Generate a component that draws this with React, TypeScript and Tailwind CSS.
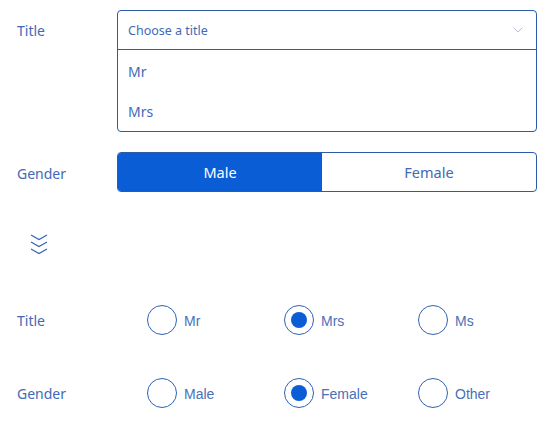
import { ChevronDown } from 'lucide-react';

const ui = "font-['Noto_Sans',sans-serif]";
const radioFont = "font-['Liberation_Sans',Arial,sans-serif]";

function Radio({ label, checked }: { label: string; checked?: boolean }) {
	return (
		<div className="flex items-center gap-[7px]">
			<span className="w-[30px] h-[30px] rounded-full border-[1.5px] border-[#2f62b4] flex items-center justify-center shrink-0">
				{checked && <span className="w-[16px] h-[16px] rounded-full bg-[#0b5dd6]" />}
			</span>
			<span className={`${radioFont} text-[14px] text-[#4a70b8] pt-[3px]`}>{label}</span>
		</div>
	);
}

function RadioRow({ label, options, selected }: { label: string; options: string[]; selected: string }) {
	return (
		<div className="flex items-center">
			<span className={`${ui} w-[100px] text-[14px] text-[#4169b6]`}>{label}</span>
			<div className="grid grid-cols-[137px_134px_auto] pl-[30px]">
				{options.map((o) => (
					<Radio key={o} label={o} checked={o === selected} />
				))}
			</div>
		</div>
	);
}

export default function App() {
	return (
		<div className={`${ui} bg-white w-[559px] h-[440px] pl-[17px] pt-[10px]`}>
			<div className="flex items-start">
				<span className="w-[100px] text-[14px] text-[#4169b6] pt-[10px]">Title</span>
				<div className="w-[420px] h-[122px] border border-[#2a5ca8] rounded-[4px] flex flex-col">
					<div className="h-[39px] flex items-center justify-between px-[10px] border-b border-[#2a5ca8]">
						<span className="text-[12.5px] text-[#4169b6] pt-[4px]">Choose a title</span>
						<ChevronDown className="w-[16px] h-[16px] text-[#8aa2c8]" strokeWidth={1} />
					</div>
					<div className="h-[41px] flex items-center px-[10px] pt-[2px] text-[14px] text-[#4169b6]">Mr</div>
					<div className="h-[41px] flex items-center px-[10px] pt-[2px] text-[14px] text-[#4169b6]">Mrs</div>
				</div>
			</div>

			<div className="flex items-center mt-[20px]">
				<span className="w-[100px] text-[14px] text-[#4169b6] pt-[2px]">Gender</span>
				<div className="w-[420px] h-[40px] flex rounded-[4px] border border-[#2a5ca8] overflow-hidden text-[14.5px]">
					<div className="w-[204px] bg-[#0b5dd6] text-white flex items-center justify-center pt-[1px]">Male</div>
					<div className="flex-1 text-[#4169b6] flex items-center justify-center pt-[1px]">Female</div>
				</div>
			</div>

			<div className="mt-[41px] ml-[13px] w-[18px] h-[22px]">
				<svg viewBox="0 0 18 22" className="w-[18px] h-[22px]" fill="none" stroke="#2f62b4" strokeWidth="1.1">
					<path d="M1 2 L9 6.5 L17 2" />
					<path d="M1 9 L9 13.5 L17 9" />
					<path d="M1 16 L9 20.5 L17 16" />
				</svg>
			</div>

			<div className="mt-[50px]">
				<RadioRow label="Title" options={['Mr', 'Mrs', 'Ms']} selected="Mrs" />
			</div>
			<div className="mt-[43px]">
				<RadioRow label="Gender" options={['Male', 'Female', 'Other']} selected="Female" />
			</div>
		</div>
	);
}
